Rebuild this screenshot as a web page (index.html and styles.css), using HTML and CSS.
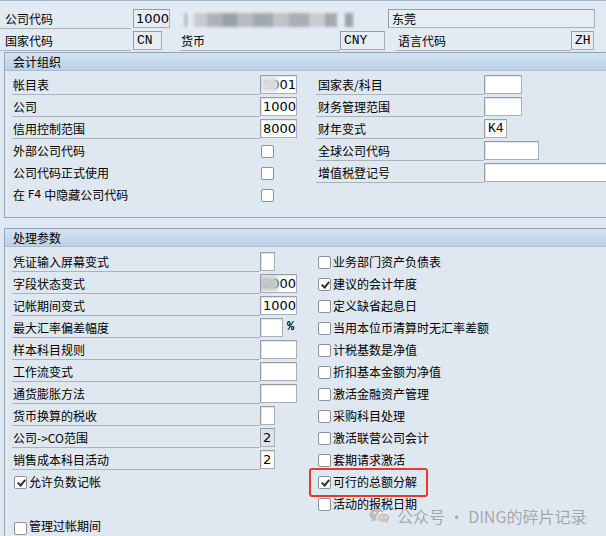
FILE: index.html
```html
<!DOCTYPE html>
<html lang="zh">
<head>
    <meta charset="UTF-8">
    <meta name="viewport" content="width=device-width, initial-scale=1.0">
    <title>公司代码全局参数</title>
    <link rel="stylesheet" href="styles.css">
</head>
<body>
<div class="screen">
    <!-- 抬头 -->
    <div class="head">
        <div class="hrow">
            <span class="lbl lbl-key">公司代码</span>
            <span class="inp ro w37">1000</span>
            <span class="blur-name"></span>
            <span class="inp ro cjk w207">东莞</span>
        </div>
        <div class="hrow">
            <span class="lbl lbl-key">国家代码</span>
            <span class="inp ro mono w29">CN</span>
            <span class="lbl lbl-cur">货币</span>
            <span class="inp ro mono w45">CNY</span>
            <span class="lbl lbl-lang">语言代码</span>
            <span class="inp ro mono w23">ZH</span>
        </div>
    </div>

    <!-- 会计组织 -->
    <div class="group">
        <div class="group-title">会计组织</div>
        <div class="group-body">
            <div class="col">
                <div class="field"><span class="lbl">帐目表</span><span class="inp w37 masked">1001<i class="mask"></i></span></div>
                <div class="field"><span class="lbl">公司</span><span class="inp w37">1000</span></div>
                <div class="field"><span class="lbl">信用控制范围</span><span class="inp w37">8000</span></div>
                <div class="field"><span class="lbl plain">外部公司代码</span><span class="chk"></span></div>
                <div class="field"><span class="lbl plain">公司代码正式使用</span><span class="chk"></span></div>
                <div class="field"><span class="lbl plain">在 <span class="lat">F4</span> 中隐藏公司代码</span><span class="chk"></span></div>
            </div>
            <div class="col col-right">
                <div class="field"><span class="lbl">国家表/科目</span><span class="inp w38"></span></div>
                <div class="field"><span class="lbl">财务管理范围</span><span class="inp w38"></span></div>
                <div class="field"><span class="lbl">财年变式</span><span class="inp mono w23">K4</span></div>
                <div class="field"><span class="lbl">全球公司代码</span><span class="inp w55"></span></div>
                <div class="field"><span class="lbl">增值税登记号</span><span class="inp w140"></span></div>
            </div>
        </div>
    </div>

    <!-- 处理参数 -->
    <div class="group group-proc">
        <div class="group-title">处理参数</div>
        <div class="group-body">
            <div class="col">
                <div class="field"><span class="lbl">凭证输入屏幕变式</span><span class="inp w15"></span></div>
                <div class="field"><span class="lbl">字段状态变式</span><span class="inp w37 masked">1000<i class="mask mask-wide"></i></span></div>
                <div class="field"><span class="lbl">记帐期间变式</span><span class="inp w37">1000</span></div>
                <div class="field"><span class="lbl">最大汇率偏差幅度</span><span class="inp w23"></span><span class="pct">%</span></div>
                <div class="field"><span class="lbl">样本科目规则</span><span class="inp w37"></span></div>
                <div class="field"><span class="lbl">工作流变式</span><span class="inp w37"></span></div>
                <div class="field"><span class="lbl">通货膨胀方法</span><span class="inp w37"></span></div>
                <div class="field"><span class="lbl">货币换算的税收</span><span class="inp w15"></span></div>
                <div class="field"><span class="lbl">公司-&gt;CO范围</span><span class="inp ro-grey w15">2</span></div>
                <div class="field"><span class="lbl">销售成本科目活动</span><span class="inp w15">2</span></div>
                <div class="field check-row"><span class="chk on"></span><span class="ctext">允许负数记帐</span></div>
                <div class="field"></div>
                <div class="field check-row lined"><span class="chk"></span><span class="ctext">管理过帐期间</span></div>
            </div>
            <div class="col col-right">
                <div class="field check-row"><span class="chk"></span><span class="ctext">业务部门资产负债表</span></div>
                <div class="field check-row"><span class="chk on"></span><span class="ctext">建议的会计年度</span></div>
                <div class="field check-row"><span class="chk"></span><span class="ctext">定义缺省起息日</span></div>
                <div class="field check-row"><span class="chk"></span><span class="ctext">当用本位币清算时无汇率差额</span></div>
                <div class="field check-row"><span class="chk"></span><span class="ctext">计税基数是净值</span></div>
                <div class="field check-row"><span class="chk"></span><span class="ctext">折扣基本金额为净值</span></div>
                <div class="field check-row"><span class="chk"></span><span class="ctext">激活金融资产管理</span></div>
                <div class="field check-row"><span class="chk"></span><span class="ctext">采购科目处理</span></div>
                <div class="field check-row"><span class="chk"></span><span class="ctext">激活联营公司会计</span></div>
                <div class="field check-row"><span class="chk"></span><span class="ctext">套期请求激活</span></div>
                <div class="field check-row"><span class="chk on"></span><span class="ctext">可行的总额分解</span></div>
                <div class="field check-row"><span class="chk"></span><span class="ctext">活动的报税日期</span></div>
            </div>
        </div>
    </div>

    <!-- 标注 -->
    <div class="highlight"></div>
    <div class="watermark">
        <svg width="22" height="16" viewBox="0 0 24 17">
            <ellipse cx="9" cy="7" rx="8.5" ry="6.8" fill="#bdbdbd"/>
            <path d="M3.5 11.5 L2.5 15 L7 12.8 Z" fill="#bdbdbd"/>
            <ellipse cx="16" cy="10.5" rx="7.5" ry="5.8" fill="#c9c9c9" stroke="#fff" stroke-width="1"/>
            <path d="M20.5 14.5 L21.5 16.8 L18 15.6 Z" fill="#c9c9c9"/>
            <circle cx="6.2" cy="5.2" r="1.1" fill="#fff"/>
            <circle cx="11.6" cy="5.2" r="1.1" fill="#fff"/>
            <circle cx="13.6" cy="9.6" r="0.9" fill="#fff"/>
            <circle cx="18.4" cy="9.6" r="0.9" fill="#fff"/>
        </svg>
        <span>公众号 · DING的碎片记录</span>
    </div>
</div>
</body>
</html>
```

FILE: styles.css
```css
* {
    box-sizing: border-box;
}

body {
    margin: 0;
    background: #dfe8f1;
    font-family: "Noto Sans CJK SC", sans-serif;
    font-size: 12px;
    color: #000;
    overflow: hidden;
}

.screen {
    position: relative;
    height: 536px;
    border-top: 1px solid #a3b5c8;
    overflow: hidden;
}

/* 抬头 */
.head {
    padding-top: 6px;
    background: #e2eaf3;
}

.hrow {
    display: flex;
    height: 22px;
}

.lbl {
    display: flex;
    align-items: center;
    height: 21px;
    padding-left: 1px;
    border-bottom: 1px solid #aab3bd;
    white-space: nowrap;
}

.head .lbl {
    height: 22px;
    padding-top: 1px;
}

.lbl-key {
    width: 131px;
    padding-left: 5px;
    margin-right: 2px;
}

.lbl-cur {
    width: 160px;
    margin-left: 18px;
}

.lbl-lang {
    width: 175px;
    margin-left: 11px;
    padding-left: 2px;
}

.inp {
    position: relative;
    display: flex;
    align-items: center;
    height: 19px;
    margin-top: 1px;
    padding: 0 2px;
    background: #fff;
    border: 1px solid #a9afb5;
    border-top-color: #969da4;
    border-left-color: #969da4;
    box-shadow: inset 1px 1px 0 #e4e7ea;
    font-family: "DejaVu Sans", sans-serif;
    font-size: 13px;
    white-space: nowrap;
    overflow: hidden;
}

.head .inp {
    margin-top: 2px;
}

.inp.ro {
    background: #e6edf5;
    box-shadow: none;
}

.inp.ro-grey {
    background: #dbe3ec;
    box-shadow: none;
}

.inp.mono {
    font-family: "Liberation Mono", monospace;
    font-size: 13px;
    padding-left: 3px;
}

.inp.cjk {
    font-family: "Noto Sans CJK SC", sans-serif;
    font-size: 12px;
    padding-left: 3px;
}

.w15 { width: 15px; }
.w23 { width: 23px; }
.w29 { width: 29px; }
.w37 { width: 37px; }
.w38 { width: 38px; }
.w45 { width: 45px; }
.w55 { width: 55px; }
.w140 { width: 140px; }
.w207 { width: 207px; margin-left: 28px; }

.blur-name {
    width: 175px;
    height: 14px;
    margin: 6px 0 0 15px;
    background: linear-gradient(90deg,
        #9a9fa4 0 2px, transparent 2px 9px,
        #c9cccf 9px 22px, #aeb2b6 22px 38px, #999ea3 38px 52px,
        #b8bcc0 52px 68px, #a3a8ac 68px 88px, #c1c4c7 88px 104px,
        #abafb3 104px 124px, #c9ccce 124px 140px, #a5a9ad 140px 152px,
        transparent 152px 160px, #9ca1a5 160px 168px, transparent 168px);
    filter: blur(1.8px);
}

/* 遮挡 */
.mask {
    position: absolute;
    left: 0;
    top: 1px;
    width: 17px;
    height: 15px;
    background: #d9dcdf;
    filter: blur(2px);
}

.mask-wide {
    left: -3px;
    width: 20px;
    background: #c3c6c9;
}

/* 分组框 */
.group {
    margin: 1px 0 0 4px;
    border: 1px solid #8da7c3;
    border-right: none;
}

.group-proc {
    margin-top: 10px;
}

.group-title {
    height: 18px;
    padding: 1px 0 0 8px;
    background: linear-gradient(#d3e2f0, #bcd1e7);
    border-bottom: 1px solid #a8bed5;
    line-height: 16px;
}

.group-body {
    display: grid;
    grid-template-columns: 304px 1fr;
    padding: 3px 0 11px 7px;
}

.group-proc .group-body {
    padding-top: 4px;
}

.col {
    display: flex;
    flex-direction: column;
}

.field {
    display: flex;
    height: 22px;
    flex-shrink: 0;
}

.field .lbl {
    width: 248px;
}

.col-right .field .lbl {
    width: 168px;
    padding-left: 2px;
}

.field .lbl.plain {
    border-bottom-color: transparent;
}

.lat {
    font-family: "DejaVu Sans", sans-serif;
    font-size: 11px;
    margin: 0 3px;
}

.pct {
    margin: 3px 0 0 4px;
    font-family: "Liberation Mono", monospace;
    font-size: 12px;
    font-weight: bold;
}

/* 复选框 */
.chk {
    position: relative;
    width: 13px;
    height: 13px;
    margin: 5px 0 0 1px;
    background: #fff;
    border: 1px solid #8b939c;
    border-radius: 2px;
    flex-shrink: 0;
}

.chk.on::after {
    content: "";
    position: absolute;
    left: 3.5px;
    top: 1px;
    width: 3px;
    height: 6px;
    border: solid #2a2f3a;
    border-width: 0 2px 2px 0;
    transform: rotate(40deg);
}

.check-row .chk {
    margin-left: 2px;
}

.ctext {
    margin-left: 2px;
    line-height: 22px;
    white-space: nowrap;
}

.check-row.lined {
    width: 184px;
    border-bottom: 1px solid #aab3bd;
}

.check-row.lined .chk {
    margin-top: 7px;
}

/* 标注 */
.highlight {
    position: absolute;
    left: 309px;
    top: 467px;
    width: 119px;
    height: 29px;
    border: 2px solid #e53a2c;
    border-radius: 3px;
}

.watermark {
    position: absolute;
    left: 369px;
    top: 505px;
    display: flex;
    align-items: center;
    gap: 6px;
    color: rgba(150, 150, 150, 0.8);
    font-size: 16px;
    line-height: 20px;
}
```
